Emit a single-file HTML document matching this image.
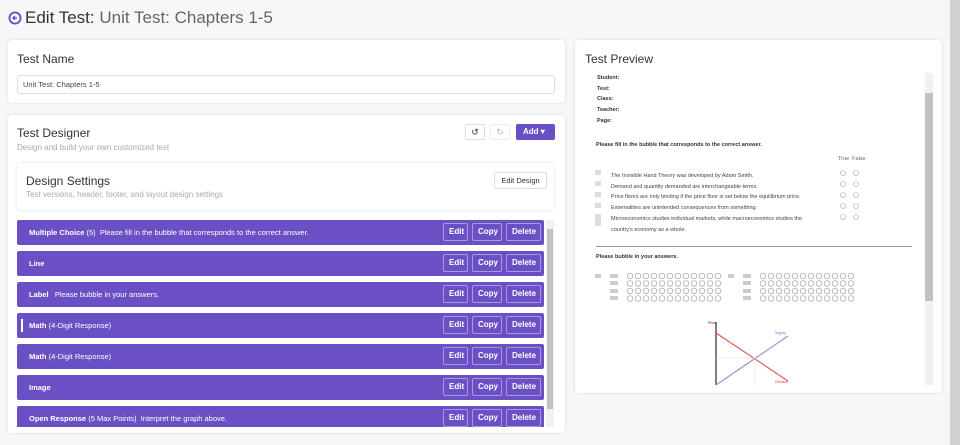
<!DOCTYPE html>
<html><head><meta charset="utf-8"><style>
*{box-sizing:border-box;margin:0;padding:0}
body{width:960px;height:445px;overflow:hidden;background:#f7f7f8;font-family:"Liberation Sans",sans-serif;position:relative;color:#333}
.abs{position:absolute}
.card{position:absolute;background:#fff;border-radius:4px;box-shadow:0 0 3px rgba(0,0,0,.12)}
.h{font-size:12px;color:#333;font-weight:500}
.sub{font-size:8px;color:#aaa}
.row{position:absolute;left:17px;width:527px;height:25px;background:#6a50c4;border-radius:2px;color:#fff;font-size:7.5px;line-height:25px;padding-left:12px}
.row b{font-weight:bold}
.btns{position:absolute;right:3px;top:3px;display:flex;gap:4px}
.btns span{display:inline-block;height:18px;line-height:16px;border:1px solid #a898e0;border-radius:2px;font-size:8px;font-weight:bold;padding:0 5px;text-align:center}
.btns span:nth-child(1){width:25px}
.btns span:nth-child(2){width:30px}
.btns span:nth-child(3){width:35px}
.pv{font-size:5.5px;color:#333}
</style></head><body>
<svg class="abs" style="left:8px;top:11px" width="14" height="14" viewBox="0 0 14 14"><circle cx="7" cy="7" r="6.5" fill="#6a50c4"/><circle cx="7" cy="7" r="4.6" fill="#fff"/><path d="M9 7H5.2M6.9 5.1L5 7l1.9 1.9" stroke="#6a50c4" stroke-width="1.5" fill="none"/></svg>
<div class="abs" style="left:25px;top:8px;font-size:17px;color:#333">Edit Test: <span style="color:#666">Unit Test: Chapters 1-5</span></div>

<div class="card" style="left:8px;top:40px;width:557px;height:63px">
 <div class="h abs" style="left:9px;top:12px">Test Name</div>
 <div class="abs" style="left:9px;top:35px;width:538px;height:19px;border:1px solid #ddd;border-radius:3px;font-size:7.5px;line-height:17px;padding-left:5px;color:#444">Unit Test: Chapters 1-5</div>
</div>

<div class="card" style="left:8px;top:115px;width:557px;height:318px">
 <div class="h abs" style="left:9px;top:11px">Test Designer</div>
 <div class="sub abs" style="left:9px;top:28px">Design and build your own customized test</div>
 <div class="abs" style="left:457px;top:9px;width:20px;height:16px;border:1px solid #ddd;border-radius:2px;font-size:9px;text-align:center;line-height:14px;color:#333">↺</div>
 <div class="abs" style="left:482px;top:9px;width:20px;height:16px;border:1px solid #eee;border-radius:2px;font-size:9px;text-align:center;line-height:14px;color:#bbb">↻</div>
 <div class="abs" style="left:508px;top:9px;width:39px;height:16px;background:#6a50c4;border-radius:2px;font-size:8px;color:#fff;font-weight:bold;line-height:16px;padding-left:7px">Add ▾</div>
</div>
<div class="card" style="left:17px;top:163px;width:537px;height:47px">
 <div class="abs" style="left:9px;top:11px;font-size:12px;color:#333">Design Settings</div>
 <div class="sub abs" style="left:9px;top:27px">Test versions, header, footer, and layout design settings</div>
 <div class="abs" style="left:477px;top:9px;width:53px;height:17px;border:1px solid #ddd;border-radius:2px;font-size:7.5px;line-height:15px;text-align:center;color:#333">Edit Design</div>
</div>

<div class="row" style="top:220px"><b>Multiple Choice</b> (5)&nbsp; Please fill in the bubble that corresponds to the correct answer.<div class="btns"><span>Edit</span><span>Copy</span><span>Delete</span></div></div>
<div class="row" style="top:251px"><b>Line</b><div class="btns"><span>Edit</span><span>Copy</span><span>Delete</span></div></div>
<div class="row" style="top:282px"><b>Label</b>&nbsp;&nbsp; Please bubble in your answers.<div class="btns"><span>Edit</span><span>Copy</span><span>Delete</span></div></div>
<div class="row" style="top:313px"><div class="abs" style="left:4px;top:6px;width:2px;height:13px;background:#fff"></div><b>Math</b> (4-Digit Response)<div class="btns"><span>Edit</span><span>Copy</span><span>Delete</span></div></div>
<div class="row" style="top:344px"><b>Math</b> (4-Digit Response)<div class="btns"><span>Edit</span><span>Copy</span><span>Delete</span></div></div>
<div class="row" style="top:375px"><b>Image</b><div class="btns"><span>Edit</span><span>Copy</span><span>Delete</span></div></div>
<div class="row" style="top:406px;height:21px;overflow:hidden;border-radius:2px 2px 0 0"><b>Open Response</b> (5 Max Points)&nbsp; Interpret the graph above.<div class="btns"><span>Edit</span><span>Copy</span><span>Delete</span></div></div>
<div class="abs" style="left:546px;top:220px;width:8px;height:207px;background:#f1f1f1"></div>
<div class="abs" style="left:547px;top:229px;width:6px;height:180px;background:#c1c1c1"></div>

<div class="card" style="left:575px;top:40px;width:367px;height:353px">
 <div class="h abs" style="left:10px;top:12px">Test Preview</div>
 <div class="abs pv" style="left:22px;top:33px;line-height:10.7px;font-weight:bold">Student:<br>Test:<br>Class:<br>Teacher:<br>Page:</div>
 <div class="abs pv" style="left:21px;top:102px;font-weight:bold">Please fill in the bubble that corresponds to the correct answer.</div>
 <div class="abs pv" style="left:263px;top:116px;color:#666">True&nbsp; False</div>
 <div class="abs pv" style="left:36px;top:131px;line-height:10.7px;color:#444">The Invisible Hand Theory was developed by Adam Smith.<br>Demand and quantity demanded are interchangeable terms.<br>Price floors are only binding if the price floor is set below the equilibrium price.<br>Externalities are unintended consequences from something.<br>Microeconomics studies individual markets, while macroeconomics studies the<br>country's economy as a whole.</div>
 <div class="abs" style="left:21px;top:206px;width:316px;height:1px;background:#999"></div>
 <div class="abs pv" style="left:21px;top:214px;font-weight:bold">Please bubble in your answers.</div>
 <div class="abs" style="left:350px;top:33px;width:8px;height:312px;background:#f1f1f1"></div>
 <div class="abs" style="left:350px;top:53px;width:8px;height:208px;background:#c1c1c1"></div>
</div>
<svg class="abs" style="left:575px;top:40px" width="367" height="353">
 <g fill="#ddd"><rect x="20" y="130" width="6" height="5"/><rect x="20" y="141" width="6" height="5"/><rect x="20" y="152" width="6" height="5"/><rect x="20" y="163" width="6" height="5"/><rect x="20" y="174" width="6" height="12"/></g>
 <g fill="none" stroke="#aaa" stroke-width=".6"><circle cx="268" cy="133" r="2.5"/><circle cx="281" cy="133" r="2.5"/><circle cx="268" cy="144" r="2.5"/><circle cx="281" cy="144" r="2.5"/><circle cx="268" cy="155" r="2.5"/><circle cx="281" cy="155" r="2.5"/><circle cx="268" cy="166" r="2.5"/><circle cx="281" cy="166" r="2.5"/><circle cx="268" cy="177" r="2.5"/><circle cx="281" cy="177" r="2.5"/></g>
 <g id="bb" fill="none" stroke="#999" stroke-width=".6">
  <circle cx="55" cy="236" r="2.8"/><circle cx="63" cy="236" r="2.8"/><circle cx="71" cy="236" r="2.8"/><circle cx="79" cy="236" r="2.8"/><circle cx="87" cy="236" r="2.8"/><circle cx="95" cy="236" r="2.8"/><circle cx="103" cy="236" r="2.8"/><circle cx="111" cy="236" r="2.8"/><circle cx="119" cy="236" r="2.8"/><circle cx="127" cy="236" r="2.8"/><circle cx="135" cy="236" r="2.8"/><circle cx="143" cy="236" r="2.8"/>
 </g>
 <use href="#bb" y="7.5"/><use href="#bb" y="15"/><use href="#bb" y="22.5"/>
 <use href="#bb" x="133"/><use href="#bb" x="133" y="7.5"/><use href="#bb" x="133" y="15"/><use href="#bb" x="133" y="22.5"/>
 <g fill="#ccc"><rect x="20" y="234" width="6" height="4"/><rect x="153" y="234" width="6" height="4"/><rect x="35" y="234" width="8" height="4"/><rect x="35" y="241" width="8" height="4"/><rect x="35" y="249" width="8" height="4"/><rect x="35" y="256" width="8" height="4"/><rect x="168" y="234" width="8" height="4"/><rect x="168" y="241" width="8" height="4"/><rect x="168" y="249" width="8" height="4"/><rect x="168" y="256" width="8" height="4"/></g>
 <line x1="141" y1="282" x2="141" y2="345" stroke="#555" stroke-width="1.5"/>
 <line x1="141" y1="293" x2="213" y2="341" stroke="#e05a5a" stroke-width="1.2"/>
 <line x1="141" y1="345" x2="213" y2="296" stroke="#8a9ad8" stroke-width="1.2"/>
 <line x1="141" y1="318" x2="180" y2="318" stroke="#ddd" stroke-width=".5"/>
 <line x1="180" y1="318" x2="180" y2="345" stroke="#ddd" stroke-width=".5"/>
 <text x="133" y="284" font-size="3.5" fill="#333" font-family="Liberation Sans">Price</text>
 <text x="200" y="294" font-size="3.5" fill="#5a7ad0" font-family="Liberation Sans">Supply</text>
 <text x="200" y="343" font-size="3.5" fill="#d04040" font-family="Liberation Sans">Demand</text>
</svg>
<div class="abs" style="left:950px;top:0;width:10px;height:445px;background:#d0d0d0"></div>
</body></html>
